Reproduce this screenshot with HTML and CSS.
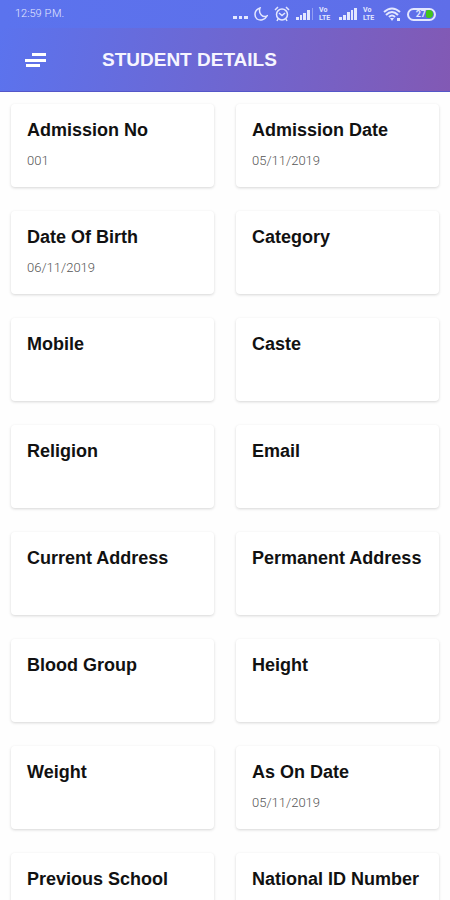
FILE: index.html
```html
<!DOCTYPE html>
<html lang="en">
<head>
<meta charset="utf-8">
<meta name="viewport" content="width=device-width, initial-scale=1">
<title>Student Details</title>
<link rel="stylesheet" href="styles.css">
</head>
<body>
<div class="status">
  <span class="time">12:59 P.M.</span>
  <div class="indicators">
    <svg width="15" height="14" viewBox="0 0 15 14"><path fill="currentColor" d="M0 9h4v3H0zM6 9h3v3H6zM11 9h4v3h-4z"/></svg>
    <svg width="14" height="14" viewBox="0 0 14 14"><path class="line" d="M6 1C0 3 0 9 3 12c3 2 8 1 10-3C9 11 4 7 6 1Z"/></svg>
    <svg width="16" height="16" viewBox="0 0 16 16"><g class="line"><circle cx="8" cy="8.500" r="5.500"/><path d="M1 4 4 1M15 4 12 1M5 7l3 2.500L11 7M4 13l-1 2M12 13l1 2"/></g></svg>
    <svg width="17" height="14" viewBox="0 0 17 14"><path fill="currentColor" d="M0 10h3v3H0zM4 8h2v5H4zM7 6h3v7H7zM11 3h3v10h-3z"/><path fill="currentColor" opacity=".4" d="M16 1h1v12h-1z"/></svg>
    <span class="volte"><span>Vo</span><span>LTE</span></span>
    <svg width="18" height="14" viewBox="0 0 18 14"><path fill="currentColor" d="M0 10h3v3H0zM4 8h3v5H4zM8 5h3v8H8zM12 3h2v10h-2zM15 1h3v12h-3z"/></svg>
    <span class="volte"><span>Vo</span><span>LTE</span></span>
    <svg width="18" height="14" viewBox="0 0 18 14"><path class="wifi" d="M1 5Q9-2 17 5M3 8Q9 2 15 8M6 10Q9 7 12 10"/><path fill="currentColor" d="m7 11 2 3 2-3ZM14 11h3v3h-3z"/></svg>
    <span class="battery">27<i></i></span>
  </div>
</div>
<header class="bar">
  <button class="menu" aria-label="Menu"><svg width="21" height="16" viewBox="0 0 21 16"><path fill="currentColor" d="M7 1h14v3H7zM0 7h21v3H0zM1 12h14v3H1z"/></svg></button>
  <h1>STUDENT DETAILS</h1>
</header>
<main class="grid">
  <section class="card"><h2>Admission No</h2><p>001</p></section>
  <section class="card"><h2>Admission Date</h2><p>05/11/2019</p></section>
  <section class="card"><h2>Date Of Birth</h2><p>06/11/2019</p></section>
  <section class="card"><h2>Category</h2></section>
  <section class="card"><h2>Mobile</h2></section>
  <section class="card"><h2>Caste</h2></section>
  <section class="card"><h2>Religion</h2></section>
  <section class="card"><h2>Email</h2></section>
  <section class="card"><h2>Current Address</h2></section>
  <section class="card"><h2>Permanent Address</h2></section>
  <section class="card"><h2>Blood Group</h2></section>
  <section class="card"><h2>Height</h2></section>
  <section class="card"><h2>Weight</h2></section>
  <section class="card"><h2>As On Date</h2><p>05/11/2019</p></section>
  <section class="card"><h2>Previous School</h2></section>
  <section class="card"><h2>National ID Number</h2></section>
</main>
</body>
</html>
```
FILE: styles.css
```css
* { box-sizing: border-box; margin: 0; }
html { scrollbar-width: none; }
body { background: #fefefe; font-family: "Liberation Sans", Arial, sans-serif; color: #111; }
svg { display: block; flex: none; }

.status {
  display: flex;
  align-items: center;
  justify-content: space-between;
  height: 28px;
  padding: 0 14px 0 15px;
  background: linear-gradient(90deg, #5b73ee, #5f6ee8);
  color: #e3e7ff;
}
.time { font: 300 11px/16px Roboto, sans-serif; }
.indicators { display: flex; align-items: center; gap: 6px; }
.line { fill: none; stroke: currentColor; stroke-width: 1.5; }
.wifi { fill: none; stroke: currentColor; stroke-width: 2; }
.volte { display: flex; flex-direction: column; width: 14px; font: 700 7px/8px Roboto, sans-serif; }
.battery {
  display: flex;
  align-items: center;
  justify-content: flex-end;
  width: 29px;
  height: 13px;
  padding-right: 1px;
  border: 2px solid currentColor;
  border-radius: 7px;
  font: 700 9px/9px Roboto, sans-serif;
}
.battery i { width: 7px; height: 8px; border-radius: 2px 4px 4px 2px; background: #43c51c; }

.bar {
  display: flex;
  align-items: center;
  gap: 56px;
  height: 64px;
  padding: 0 25px;
  border-bottom: 1px solid #5456c8;
  background: linear-gradient(100deg, #5b73ee, #6c68d4 45%, #8259b4);
  color: #fff;
}
.menu { padding: 0; border: 0; background: none; color: inherit; }
.bar h1 { font-size: 19px; line-height: 24px; font-weight: 700; color: #f6f5ff; }

.grid {
  display: grid;
  grid-template-columns: 1fr 1fr;
  gap: 24px 22px;
  padding: 12px 11px 24px;
}
.card {
  min-height: 83px;
  padding: 15px 16px;
  border-radius: 4px;
  background: #fff;
  box-shadow: 0 1px 3px rgba(0, 0, 0, .16);
}
.card h2 { font-size: 18px; line-height: 22px; font-weight: 700; white-space: nowrap; }
.card p { margin-top: 10px; font: 300 13px/20px Roboto, sans-serif; color: #555; }
```
